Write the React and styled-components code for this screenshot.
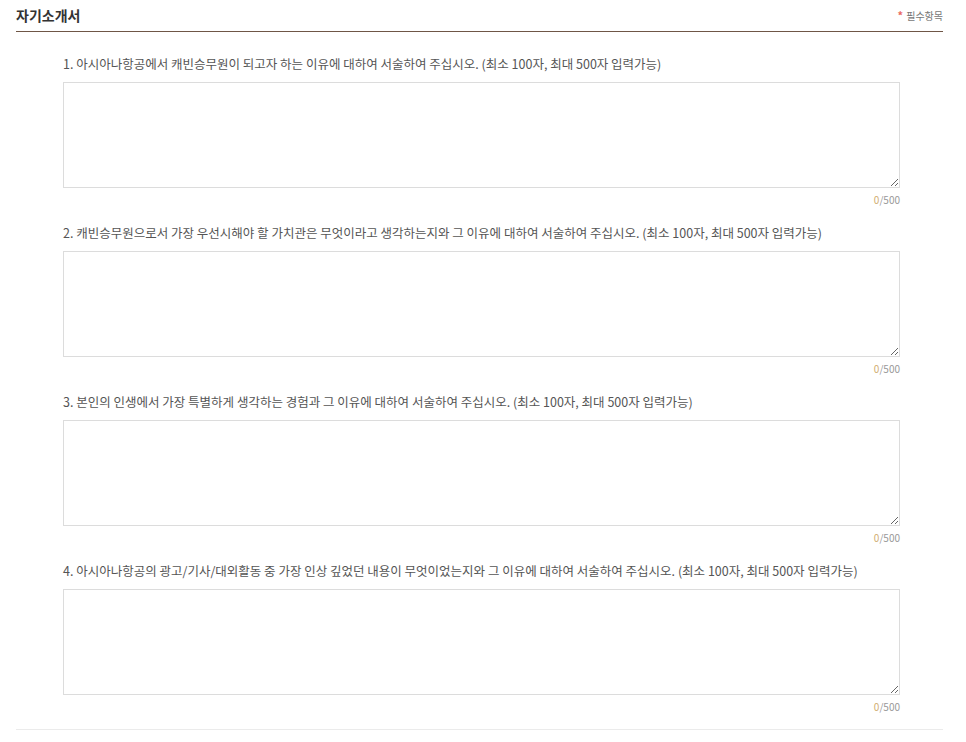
import React, { useState } from 'react';
import styled, { createGlobalStyle } from 'styled-components';

const GlobalStyle = createGlobalStyle`
  body {
    margin: 0;
    background: #fff;
    font-family: "Noto Sans CJK KR", "Noto Sans", sans-serif;
  }
`;

const Section = styled.section`
  padding: 0 23px 0 16px;
  width: 927px;
`;

const Header = styled.div`
  display: flex;
  align-items: center;
  justify-content: space-between;
  height: 31px;
  border-bottom: 1px solid #6f5646;
`;

const Title = styled.h2`
  margin: 0;
  font-size: 14px;
  font-weight: 700;
  color: #333;
  line-height: 1;
  padding-bottom: 2px;
`;

const Required = styled.span`
  font-size: 10px;
  color: #777;
  display: flex;
  align-items: center;
  gap: 3px;
  padding-bottom: 1px;
  em {
    font-style: normal;
    color: #ea6a62;
    font-size: 11px;
    font-weight: 700;
  }
`;

const Form = styled.div`
  padding: 23px 43px 15px 47px;
  border-bottom: 1px solid #ebebeb;
`;

const Item = styled.div`
  & + & {
    margin-top: 17px;
  }
`;

const Label = styled.p`
  margin: 0 0 9px;
  font-size: 12.5px;
  line-height: 18px;
  color: #555;
`;

const TextArea = styled.textarea`
  display: block;
  box-sizing: border-box;
  width: 100%;
  height: 106px;
  border: 1px solid #dcdcdc;
  padding: 8px;
  margin: 0;
  font-family: inherit;
  font-size: 12px;
  color: #333;
  outline: none;
`;

const Counter = styled.div`
  text-align: right;
  font-size: 10px;
  line-height: 14px;
  margin-top: 5px;
  color: #999;
  span {
    color: #d1ad72;
  }
`;

const questions = [
  '1. 아시아나항공에서 캐빈승무원이 되고자 하는 이유에 대하여 서술하여 주십시오. (최소 100자, 최대 500자 입력가능)',
  '2. 캐빈승무원으로서 가장 우선시해야 할 가치관은 무엇이라고 생각하는지와 그 이유에 대하여 서술하여 주십시오. (최소 100자, 최대 500자 입력가능)',
  '3. 본인의 인생에서 가장 특별하게 생각하는 경험과 그 이유에 대하여 서술하여 주십시오. (최소 100자, 최대 500자 입력가능)',
  '4. 아시아나항공의 광고/기사/대외활동 중 가장 인상 깊었던 내용이 무엇이었는지와 그 이유에 대하여 서술하여 주십시오. (최소 100자, 최대 500자 입력가능)',
];

function Question({ text }) {
  const [value, setValue] = useState('');
  return (
    <Item>
      <Label>{text}</Label>
      <TextArea maxLength={500} value={value} onChange={e => setValue(e.target.value)} />
      <Counter><span>{value.length}</span>/500</Counter>
    </Item>
  );
}

export default function App() {
  return (
    <>
      <GlobalStyle />
      <Section>
        <Header>
          <Title>자기소개서</Title>
          <Required><em>*</em>필수항목</Required>
        </Header>
        <Form>
          {questions.map((q, i) => (
            <Question key={i} text={q} />
          ))}
        </Form>
      </Section>
    </>
  );
}
